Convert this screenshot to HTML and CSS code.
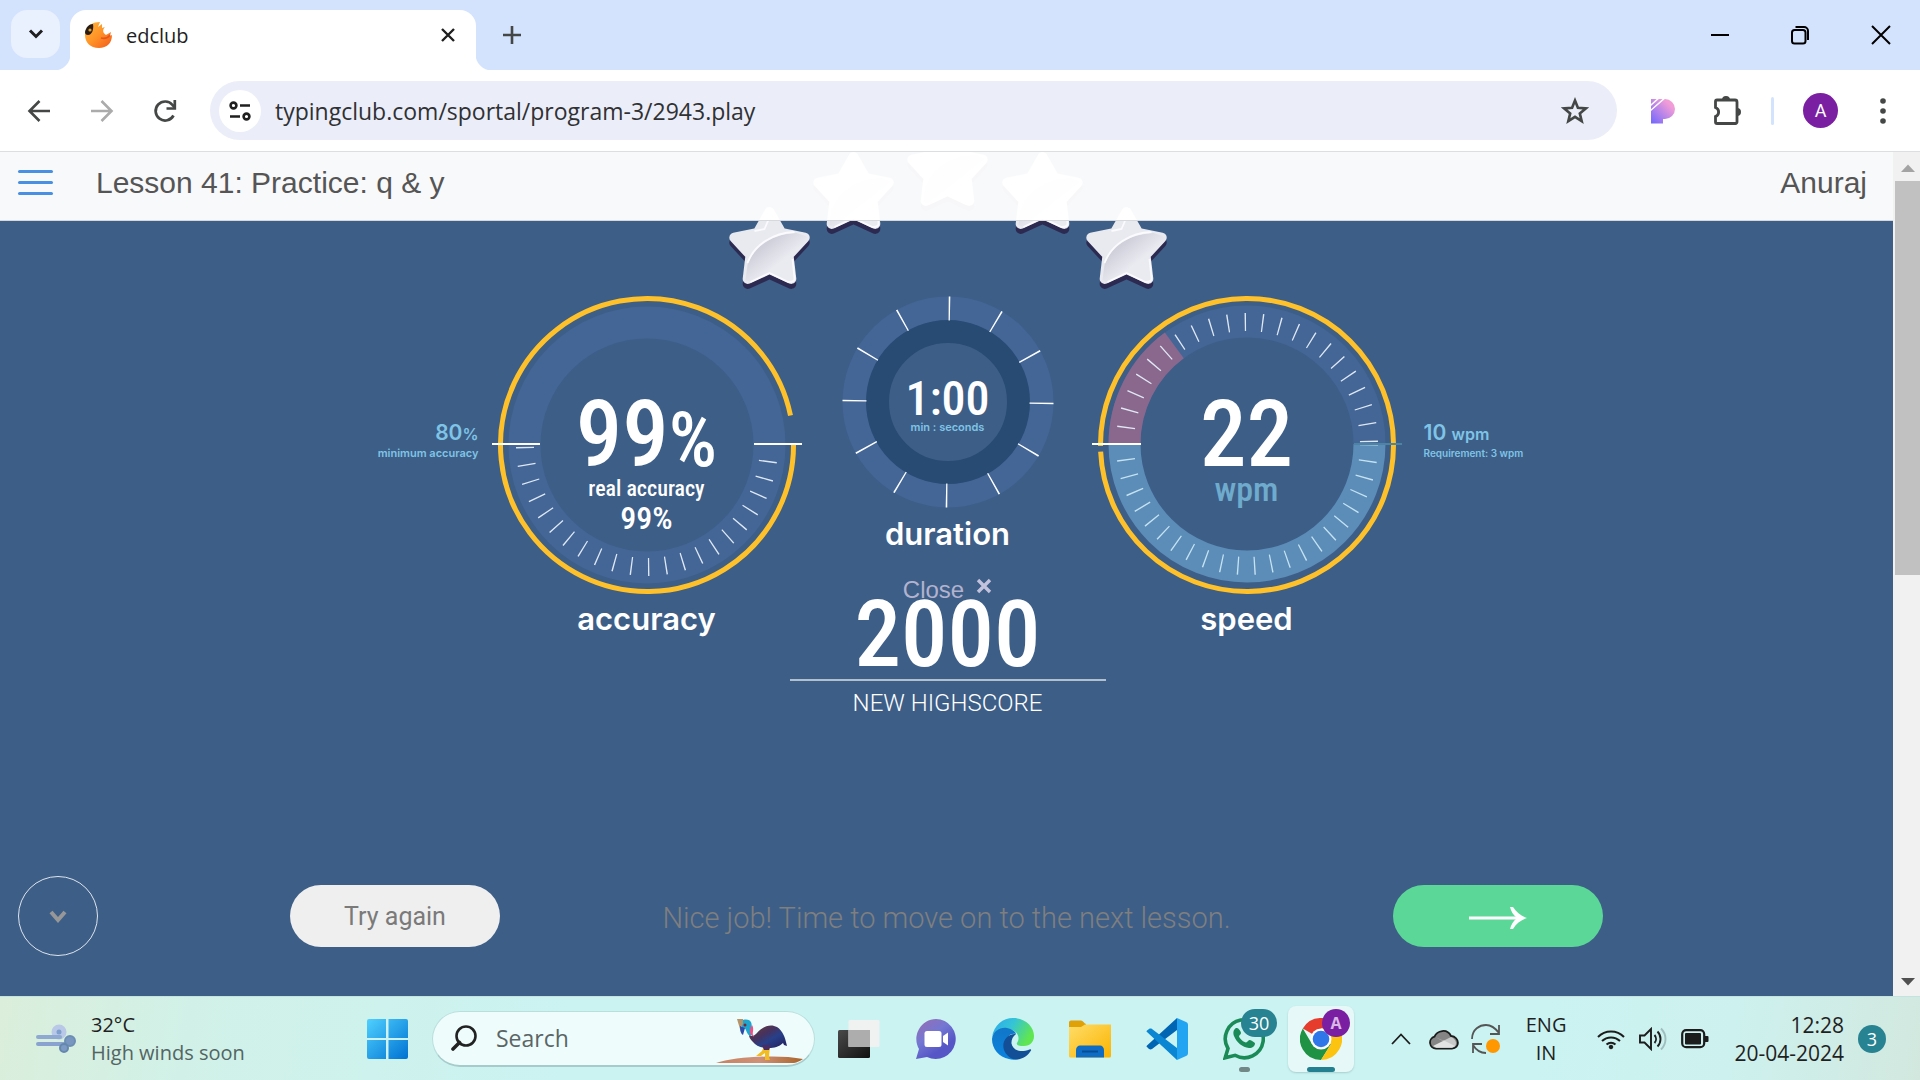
FILE: index.html
```html
<!DOCTYPE html>
<html lang="en">
<head>
<meta charset="utf-8">
<meta name="viewport" content="width=device-width, initial-scale=1">
<title>edclub</title>
<link rel="stylesheet" href="styles.css">
</head>
<body>
<div class="tabstrip">
  <button class="tab-search" aria-label="Search tabs"><svg width="16" height="12" viewBox="0 0 16 12"><path d="M2 2.500l6 6 6-6" fill="none" stroke="#1f1f1f" stroke-width="3"/></svg></button>
  <div class="tab">
    <svg class="favicon" width="28" height="28" viewBox="0 0 28 28"><defs><linearGradient id="bird" x1="0" y1="0" x2="1" y2="1"><stop offset="0" stop-color="#ffb53a"/><stop offset=".5" stop-color="#ff9327"/><stop offset="1" stop-color="#f15a1c"/></linearGradient></defs><path d="M2 10C4 4 9 1 16 1l-2 5 4-3v4l3-1c-3 3-2 6 1 8l5-3-1 4 2-1c0 8-5 13-13 13C6 27 1 21 1 14c0-2 .3-3 1-4z" fill="url(#bird)"/><path d="M1 11C2 6 5 3 9 3c1 5-1 11-5 11-2 0-3-1-3-3z" fill="#2a1c12"/><circle cx="6" cy="9" r="1.600" fill="#d8a13a"/><path d="M17 17c4 1 7 0 9-3" stroke="#e9541b" fill="none" stroke-width="1.500"/></svg>
    <span class="tab-title">edclub</span>
    <button class="plain" aria-label="Close tab"><svg width="16" height="16" viewBox="0 0 16 16"><path d="M2 2l12 12M14 2L2 14" stroke="#1f1f1f" stroke-width="2.400"/></svg></button>
  </div>
  <button class="plain new-tab" aria-label="New tab"><svg width="18" height="18" viewBox="0 0 18 18"><path d="M9 0v18M0 9h18" stroke="#444746" stroke-width="2.600"/></svg></button>
  <div class="window-controls">
    <button class="plain" aria-label="Minimize"><svg width="18" height="20" viewBox="0 0 18 20"><path d="M0 10h18" stroke="#000" stroke-width="2"/></svg></button>
    <button class="plain" aria-label="Restore"><svg width="20" height="20" viewBox="0 0 20 20" fill="none" stroke="#000" stroke-width="2"><rect x="2" y="5" width="13.500" height="13.500" rx="2.500"/><path d="M5.500 2h8.500a4 4 0 0 1 4 4v9"/></svg></button>
    <button class="plain" aria-label="Close"><svg width="20" height="20" viewBox="0 0 20 20"><path d="M1 1l18 18M19 1L1 19" stroke="#000" stroke-width="2"/></svg></button>
  </div>
</div>

<div class="toolbar">
  <div class="nav">
    <button class="plain" aria-label="Back"><svg width="24" height="24" viewBox="0 0 24 24" fill="none" stroke="#444746" stroke-width="2.600"><path d="M23 12H3M12.500 2L2.500 12l10 10"/></svg></button>
    <button class="plain" aria-label="Forward"><svg width="24" height="24" viewBox="0 0 24 24" fill="none" stroke="#ababab" stroke-width="2.600"><path d="M1 12h20M11.500 2l10 10-10 10"/></svg></button>
    <button class="plain" aria-label="Reload"><svg width="24" height="24" viewBox="0 0 24 24" fill="none" stroke="#444746" stroke-width="2.700"><path d="M20.500 16.500A9.500 9.500 0 1 1 19.500 6l2.500 2.500"/><path d="M21.800 1v8.500H13.500"/></svg></button>
  </div>
  <div class="omnibox">
    <button class="site-info" aria-label="View site information"><svg width="22" height="20" viewBox="0 0 22 20" fill="none" stroke="#1f1f1f" stroke-width="2.600"><circle cx="4.500" cy="4.500" r="2.900"/><path d="M11 4.500h10M1 15.500h10"/><circle cx="17.500" cy="15.500" r="2.900"/></svg></button>
    <input class="url" type="text" aria-label="Address" value="typingclub.com/sportal/program-3/2943.play">
    <button class="plain" aria-label="Bookmark this tab"><svg width="28" height="28" viewBox="0 0 28 28"><path d="M14 3.500l2.900 7.300 7.900.6-6 5 1.900 7.700-6.700-4.200-6.700 4.200 1.900-7.700-6-5 7.900-.6z" fill="none" stroke="#444746" stroke-width="2.600"/></svg></button>
  </div>
  <div class="extensions">
    <svg class="ext-p" width="24" height="26" viewBox="0 0 24 26"><defs><linearGradient id="pg" x1="1" y1="0" x2="0" y2="1"><stop offset="0" stop-color="#f9a2d4"/><stop offset=".25" stop-color="#ee9bd8"/><stop offset="1" stop-color="#6f66ff"/></linearGradient></defs><path d="M0 1h14a10 10 0 0 1 0 20h-2v4.500H0z" fill="url(#pg)"/><path d="M-1 8L9-1M-1 13L15-1" stroke="#fff" stroke-width="1.500"/></svg>
    <button class="plain" aria-label="Extensions"><svg width="30" height="30" viewBox="0 0 30 30"><path d="M3.500 5.500a1.500 1.500 0 0 1 1.500-1.500h18a2 2 0 0 1 2 2v20a1.500 1.500 0 0 1-1.500 1.500H5A1.500 1.500 0 0 1 3.500 26v-5.500a4.800 4.800 0 0 0 0-9z" fill="none" stroke="#444746" stroke-width="2.800"/><path d="M10 4a4 4 0 0 1 8 0zM25 12a4 4 0 0 1 0 8z" fill="#444746"/></svg></button>
    <span class="divider"></span>
    <button class="avatar" aria-label="Profile">A</button>
    <button class="plain" aria-label="Menu"><svg width="6" height="26" viewBox="0 0 6 26" fill="#444746"><circle cx="3" cy="3" r="2.800"/><circle cx="3" cy="13" r="2.800"/><circle cx="3" cy="23" r="2.800"/></svg></button>
  </div>
</div>

<div class="viewport">
  <div class="page">
    <header class="lesson-bar">
      <button class="plain burger" aria-label="Open menu"><i></i><i></i><i></i></button>
      <h1>Lesson 41: Practice: q &amp; y</h1>
      <a class="user" href="#">Anuraj</a>
    </header>
    <main class="result">
      <svg class="stars" width="440" height="138" viewBox="-2 0 440 138">
        <defs>
          <linearGradient id="shine" x1=".1" y1=".1" x2=".7" y2=".7"><stop offset=".3" stop-color="#cfd0da"/><stop offset=".8" stop-color="#eaebf1"/></linearGradient>
          <g id="star">
            <polygon points="0,-37 11.800,-16.200 35.200,-11.400 19,6.200 21.800,29.900 0,20 -21.800,29.900 -19,6.200 -35.200,-11.400 -11.800,-16.200" transform="translate(0 5)" fill="#2c2a50" stroke="#2c2a50" stroke-width="10" stroke-linejoin="round"/>
            <polygon points="0,-37 11.800,-16.200 35.200,-11.400 19,6.200 21.800,29.900 0,20 -21.800,29.900 -19,6.200 -35.200,-11.400 -11.800,-16.200" fill="#e9eaf0" stroke="#e9eaf0" stroke-width="10" stroke-linejoin="round"/>
            <path d="M-22 16C-15-4 4-15 27-16l9 3c4 3 2 6-1 8L23 8l2 23-6 2-19-9-19 9-5-2z" fill="url(#shine)"/>
            <path d="M-22 14C-15-5 4-16 25-17M-15-18l10-2 6-14M-19 33l19-9 19 9c6 0 6-2 6-4L23 10" fill="none" stroke="#fbfbfd" stroke-width="1.800"/>
          </g>
        </defs>
        <use href="#star" x="40.500" y="97"/><use href="#star" x="124.500" y="42"/><use href="#star" x="218.500" y="19"/><use href="#star" x="313.500" y="42"/><use href="#star" x="397.500" y="97"/>
      </svg>

      <div class="stage">
        <div class="target target-left">
          <p class="target-value">80<small>%</small></p>
          <p class="target-note">minimum accuracy</p>
        </div>

        <section class="dial">
          <svg class="gauge" width="310" height="300" viewBox="0 0 310 300" fill="none">
            <circle cx="155" cy="150" r="122.500" stroke="#436696" stroke-width="32"/>
            <path d="M277 150A122 122 0 0 1 33 150" pathLength="23" stroke="#dfe8f4" stroke-width="18" stroke-dasharray="0 .96 .08 0" />
            <path d="M301.500 150A146.500 146.500 0 1 1 298.500 120.500" stroke="#ffc12a" stroke-width="5"/>
            <path d="M0 149h48M262 149h48" stroke="#fff" stroke-width="2"/>
          </svg>
          <div class="reading">
            <p class="big">99<small>%</small></p>
            <p class="real">real accuracy</p>
            <p class="real-value">99%</p>
          </div>
          <h2>accuracy</h2>
        </section>

        <div class="middle">
          <section class="timer">
            <svg class="gauge" width="212" height="212" viewBox="0 0 212 212" fill="none">
              <circle cx="106" cy="106" r="93.500" stroke="#436696" stroke-width="24"/>
              <circle cx="106" cy="106" r="70.500" stroke="#284b73" stroke-width="23"/>
              <circle cx="106" cy="106" r="93.500" pathLength="1200" stroke="#fff" stroke-width="24" stroke-dasharray="3 97" transform="rotate(.4 106 106)"/>
            </svg>
            <div class="reading">
              <p class="clock">1:00</p>
              <p class="target-note">min : seconds</p>
            </div>
            <h2>duration</h2>
          </section>
          <button class="plain close-ad">Close <svg width="16" height="16" viewBox="0 0 16 16"><path d="M2 2l12 12M14 2L2 14" stroke="#c3c2dc" stroke-width="3.400"/></svg></button>
          <div class="score">
            <p class="big">2000</p>
            <p class="score-label">NEW HIGHSCORE</p>
          </div>
        </div>

        <section class="dial">
          <svg class="gauge" width="310" height="300" viewBox="0 0 310 300" fill="none">
            <path d="M32.500 149A122.500 122.500 0 0 1 277.500 149" stroke="#436696" stroke-width="32"/>
            <path d="M32.500 149A122.500 122.500 0 0 1 82.300 50.400" stroke="#8a678d" stroke-width="32"/>
            <path d="M277.500 149A122.500 122.500 0 0 1 32.500 149" stroke="#5b8db8" stroke-width="32"/>
            <path d="M33 149A122 122 0 0 1 277 149" pathLength="23" stroke="#dfe8f4" stroke-width="18" stroke-dasharray="0 .96 .08 0"/>
            <path d="M277 149A122 122 0 0 1 33 149" pathLength="23" stroke="#c5e2f0" stroke-width="18" stroke-dasharray=".08 .92"/>
            <circle cx="155" cy="150" r="146.500" pathLength="360" transform="rotate(179.600 155 150)" stroke="#ffc12a" stroke-width="5" stroke-dasharray="357.800 2.200"/>
            <path d="M262 149h48" stroke="#4d83a3" stroke-width="2"/>
            <path d="M0 149h49" stroke="#fff" stroke-width="2"/>
          </svg>
          <div class="reading">
            <p class="big">22</p>
            <p class="unit">wpm</p>
          </div>
          <h2>speed</h2>
        </section>

        <div class="target target-right">
          <p class="target-value">10 <small>wpm</small></p>
          <p class="target-note">Requirement: 3 wpm</p>
        </div>
      </div>

      <div class="actions">
        <button class="round" aria-label="Scroll down"><svg width="18" height="13" viewBox="0 0 18 13"><path d="M2 2l7 8 7-8" fill="none" stroke="#979797" stroke-width="4"/></svg></button>
        <button class="pill again">Try again</button>
        <p class="message">Nice job! Time to move on to the next lesson.</p>
        <button class="pill next" aria-label="Next lesson"><svg width="58" height="22" viewBox="0 0 58 22" fill="#fff"><path d="M0 9.500h50v3H0z"/><path d="M41 0h3c3 5 8 9 14 11-6 2-11 6-14 11h-3c1-4 3-8 7-11-4-3-6-7-7-11z"/></svg></button>
      </div>
    </main>
  </div>
  <div class="scrollbar">
    <svg width="14" height="8" viewBox="0 0 14 8"><path d="M0 8l7-7.500L14 8z" fill="#a3a3a3"/></svg>
    <span class="thumb"></span>
    <svg class="down" width="14" height="8" viewBox="0 0 14 8"><path d="M0 0l7 7.500L14 0z" fill="#505050"/></svg>
  </div>
</div>

<footer class="taskbar">
  <button class="plain weather">
    <svg width="40" height="30" viewBox="0 0 40 30" fill="none" stroke-linecap="round"><circle cx="23" cy="8" r="5" stroke="#b9c8e6" stroke-width="5" fill="#7f9fce"/><path d="M2 13h22" stroke="#8fa9d2" stroke-width="4"/><path d="M2 20h28" stroke="#89a2cf" stroke-width="4"/><circle cx="34" cy="17" r="5" fill="#7896c0" stroke="#6c8eb4" stroke-width="2"/><circle cx="28" cy="24" r="4" fill="#7c9ac4" stroke="#6587ae" stroke-width="2"/></svg>
    <span>32°C<br><em>High winds soon</em></span>
  </button>
  <button class="plain start" aria-label="Start"><svg width="41" height="40" viewBox="0 0 41 40"><defs><linearGradient id="win" x1="0" y1="0" x2="1" y2="1" ><stop offset="0" stop-color="#4fd0ff"/><stop offset="1" stop-color="#0072d2"/></linearGradient></defs><path d="M2 0h17v19H0V2a2 2 0 0 1 2-2zM21.500 0H39a2 2 0 0 1 2 2v17H21.500zM0 21h19v19H2a2 2 0 0 1-2-2zM21.500 21H41v17a2 2 0 0 1-2 2H21.500z" fill="url(#win)"/></svg></button>
  <div class="search">
    <label for="search"><svg role="img" aria-label="Search" width="26" height="26" viewBox="0 0 26 26" fill="none" stroke="#222" stroke-linecap="round"><circle cx="15" cy="11" r="9.500" stroke-width="2.600"/><path d="M8.500 17.500L2 24" stroke-width="3.600"/></svg></label>
    <input id="search" type="text" placeholder="Search">
    <svg class="bird" width="88" height="46" viewBox="0 0 88 46"><defs><linearGradient id="body" x1="0" y1="0" x2="1" y2="1"><stop offset="0" stop-color="#6b3a35"/><stop offset=".4" stop-color="#443260"/><stop offset=".6" stop-color="#27408a"/><stop offset="1" stop-color="#221e58"/></linearGradient><linearGradient id="sand"><stop offset="0" stop-color="#c78261"/><stop offset=".5" stop-color="#cf9077"/><stop offset="1" stop-color="#a9642a"/></linearGradient></defs><path d="M0 45C18 39 62 36 87 41c-3 2-6 3.500-9 4z" fill="url(#sand)"/><path d="M48 28l-2 5-6 5h5l4-3v7h5l-1-3 1-11z" fill="#f2bd24"/><path d="M33 17c3 2 5 1 8-2 5-6 13-10 20-6 6 4 8 10 10 19l-3-1-1-2c-4 4-9 5-14 5-8 0-13-2-16-6-3-3-4-5-4-7z" fill="url(#body)"/><path d="M46 27h9l-2 5h-5z" fill="#4a2c62"/><path d="M27 2c8-2 10 4 8 9-1 3 1 5 0 7-5-1-4-7-7-8-3 0-4-6-1-8z" fill="#1fa6cf"/><path d="M36 7c3 5-1 8 2 12-5-2-5-7-2-12z" fill="#ee4f84"/><path d="M21 1l6 0v5l-3 5z" fill="#b3946b"/><path d="M24 8l5 2-2 7c-3-2-3-6-3-9z" fill="#2a4ba8"/><circle cx="29" cy="7" r="1.500" fill="#7d2430"/></svg>
  </div>
  <nav class="apps" aria-label="Apps">
    <button class="app" aria-label="Task view"><svg width="42" height="40" viewBox="0 0 42 40"><defs><linearGradient id="tv" x1="0" y1="0" x2="1" y2="1"><stop offset="0" stop-color="#4a4a4a"/><stop offset="1" stop-color="#111"/></linearGradient></defs><rect y="11" width="32" height="28" rx="1.500" fill="url(#tv)"/><rect x="10.500" y="1" width="31" height="27" rx="1" fill="#f1f1f1" fill-opacity=".97"/><path d="M10.500 11H32v17H10.500z" fill="#adadad"/></svg></button>
    <button class="app" aria-label="Chat"><svg width="40" height="40" viewBox="0 0 40 40"><defs><linearGradient id="chat" x1="0" y1="0" x2=".7" y2="1"><stop offset="0" stop-color="#9a6db0"/><stop offset=".45" stop-color="#7377d2"/><stop offset=".8" stop-color="#5656c6"/></linearGradient></defs><path d="M20 0a20 20 0 1 1-9 38L0 40l3-10A20 20 0 0 1 20 0z" fill="url(#chat)"/><rect x="8.500" y="12" width="17" height="16" rx="2.500" fill="#fff"/><path d="M27 17l5-3.500v13L27 23z" fill="#fff"/></svg></button>
    <button class="app" aria-label="Edge"><svg width="42" height="42" viewBox="0 0 42 42"><defs><linearGradient id="e1" x1="0" y1="0" x2="1" y2=".4"><stop offset="0" stop-color="#2ba8ee"/><stop offset=".5" stop-color="#35c4d6"/><stop offset="1" stop-color="#60e650"/></linearGradient><linearGradient id="e2" x1="0" y1="0" x2="0" y2="1"><stop offset="0" stop-color="#1176c8"/><stop offset="1" stop-color="#0a84e0"/></linearGradient></defs><path d="M0 19C2 7 11 0 21 0c13 0 21 9 21 18 0 6-4 10-10 10-5 0-8-1-7-3 4-6 0-13-9-14C8 10 2 14 0 19z" fill="url(#e1)"/><path d="M0 21C1 13 8 9 15 10c5 1 9 4 9 6-9-2-12 9-8 16 4 6 9 9 13 8-4 2-9 2-12 1C7 39 0 31 0 21z" fill="url(#e2)"/><path d="M24 16c-8-1-15 7-12 16 2 5 7 10 13 9.500 6-.5 11-4 14-9 .5-1-.5-1.500-1.500-1-10 4-17 0-18-6-.3-3 1-7 4.500-9.500z" fill="#124f96"/></svg></button>
    <button class="app" aria-label="File Explorer"><svg width="42" height="38" viewBox="0 0 42 38"><defs><linearGradient id="fold" x1="0" y1="0" x2="1" y2="1"><stop offset="0" stop-color="#ffdd69"/><stop offset="1" stop-color="#fbb400"/></linearGradient></defs><path d="M0 2A2 2 0 0 1 2 .5h10c2 0 3 3 5 3.500v8H0z" fill="#e0a008"/><path d="M0 7h12l4-2.500h26V36a1.500 1.500 0 0 1-1.500 1.500H1.500A1.500 1.500 0 0 1 0 36z" fill="url(#fold)"/><path d="M7 37.500V30c0-3 2-4.500 4-4.500h20c2 0 4 2 4 4.500v7.500z" fill="#0f6cc4"/><path d="M13 31.500h16" stroke="#084c93" stroke-width="2"/></svg></button>
    <button class="app" aria-label="Visual Studio Code"><svg width="42" height="42" viewBox="0 0 42 42"><path d="M1 27.500L31 0v12L6 31c-1 .7-2 .5-3 0l-2-2c-.6-.5-.6-1 0-1.500z" fill="#0065b3"/><path d="M1 14l30 28V30L6 11c-1-.7-2-.5-3 0l-2 1.500c-.6.500-.6 1 0 1.500z" fill="#0a86d2"/><path d="M31 0l9 4c1.500.7 2 1.500 2 3v28c0 1.500-.5 2.300-2 3l-9 4z" fill="#23a4f2"/></svg></button>
    <button class="app" aria-label="WhatsApp"><svg width="42" height="42" viewBox="0 0 42 42"><path d="M2.200 39.800L5 30.500A19 19 0 1 1 12 37.300z" fill="none" stroke="#1a8a57" stroke-width="3.600"/><path d="M13 10c-3 2-3 5-2 8 3 7 8 11 15 12 3 .3 6-2 6-4.500 0-1-4-3.500-5.500-3.500s-2 2.500-3.500 2.500c-2 0-6.500-4-7-6 0-1.500 2-2 2-3.500S15.500 10 14 10z" fill="#1a8a57"/></svg><span class="count">30</span><i class="dot"></i></button>
    <button class="app active" aria-label="Chrome"><svg width="42" height="42" viewBox="0 0 42 42"><path d="M21 21L2.800 10.500A21 21 0 0 1 39.200 10.500H21z" fill="#e63c2e"/><path d="M21 21l10 5-10 16A21 21 0 0 1 2.800 10.500L12 26z" fill="#1f9243"/><path d="M21 10.500h18.200A21 21 0 0 1 21 42l10-16z" fill="#fcc310"/><circle cx="21" cy="21" r="10.500" fill="#fff"/><circle cx="21" cy="21" r="8.300" fill="#2f76e8"/></svg><span class="who">A</span><i class="dot"></i></button>
  </nav>
  <div class="tray">
    <button class="plain" aria-label="Hidden icons"><svg width="20" height="12" viewBox="0 0 20 12"><path d="M1 11l9-9.500L19 11" fill="none" stroke="#1c1c1c" stroke-width="1.800"/></svg></button>
    <svg class="cloud" width="30" height="22" viewBox="0 0 30 22"><path d="M7 20.500a6 6 0 0 1-1.500-11.800C8 2.500 18 0 22 8c9 1 9 12.500 1 12.500z" fill="#858585" stroke="#1b1b1b" stroke-width="1.800"/><path d="M6 9l8 4 8-4c6 2 7 10 1 10.500H7L15 13z" fill="#c9c9c9"/><path d="M4 18l11-5.500L26 18l-3 1.800H7z" fill="#e3e3e3"/></svg>
    <svg class="sync" width="30" height="30" viewBox="0 0 30 30" fill="none" stroke="#555" stroke-width="1.800"><path d="M1 15C1 5 9 1 15 1c6 0 10 4 13 8M28 1v9h-9M15 29c-6 0-10-3-13-8M2 29v-9h9"/><circle cx="22" cy="22" r="7" fill="#ff9800" stroke="none"/></svg>
    <button class="plain lang">ENG<br>IN</button>
    <button class="plain status" aria-label="Network, volume and battery">
      <svg width="28" height="22" viewBox="0 0 28 22" fill="none" stroke="#1c1c1c" stroke-width="2"><path d="M1 9a18 18 0 0 1 26 0M5 13a13 13 0 0 1 18 0M9.500 16.500a7 7 0 0 1 9 0"/><circle cx="14" cy="19" r="1.800" fill="#1c1c1c" stroke-width="1"/></svg>
      <svg width="28" height="24" viewBox="0 0 28 24" fill="none" stroke="#1c1c1c" stroke-width="1.900"><path d="M1 8.500h4.500L12 2v20l-6.500-6.500H1z"/><path d="M15.500 8a6 6 0 0 1 0 8M18.500 4.500c4 4 4 11 0 15"/><path d="M22 1.500c6 6 6 15 0 21" stroke="#9fbfbf"/></svg>
      <svg width="28" height="20" viewBox="0 0 28 20"><rect x="1.200" y="1.200" width="22" height="17" rx="4" fill="none" stroke="#1c1c1c" stroke-width="2.200"/><rect x="4" y="4" width="16" height="11.500" rx="1" fill="#1c1c1c"/><path d="M24 7h2.500a1 1 0 0 1 1 1v4a1 1 0 0 1-1 1H24z" fill="#1c1c1c"/></svg>
    </button>
    <button class="plain datetime">12:28<br>20-04-2024</button>
    <span class="notices">3</span>
  </div>
</footer>
</body>
</html>
```

FILE: styles.css
```css
* { box-sizing: border-box; }
body {
  margin: 0;
  min-height: 100vh;
  display: flex;
  flex-direction: column;
  font-family: "Open Sans", "Noto Sans", sans-serif;
  color: #1f1f1f;
}
p, h1, h2 { margin: 0; font-weight: inherit; }
svg { display: block; flex: none; }
button, input { font: inherit; color: inherit; }
.plain { border: 0; background: none; padding: 0; }

/* Tab strip */
.tabstrip {
  height: 70px;
  display: flex;
  padding: 10px 29px 0 11px;
  background: #d3e3fd;
}
.tab-search {
  width: 49px;
  height: 48px;
  margin-right: 10px;
  display: grid;
  place-items: center;
  border: 0;
  border-radius: 16px;
  background: #e9f0fe;
}
.tab {
  position: relative;
  width: 406px;
  display: flex;
  align-items: center;
  padding: 0 20px 10px 14px;
  border-radius: 16px 16px 0 0;
  background: #fff;
}
.tab::before, .tab::after {
  content: "";
  position: absolute;
  bottom: 0;
  width: 16px;
  height: 16px;
}
.tab::before { right: 100%; background: radial-gradient(circle at 0 0, transparent 16px, #fff 17px); }
.tab::after { left: 100%; background: radial-gradient(circle at 100% 0, transparent 16px, #fff 17px); }
.tab-title { flex: 1; margin-left: 14px; font-size: 20px; }
.new-tab { margin: 0 0 10px 27px; }
.window-controls { margin-left: auto; display: flex; align-items: center; gap: 61px; padding-bottom: 10px; }

/* Toolbar */
.toolbar {
  height: 82px;
  display: flex;
  align-items: center;
  padding: 0 34px 0 27px;
  background: linear-gradient(#fff, #fff) content-box, #fff;
  border-bottom: 1px solid #dcdfe2;
}
.nav { display: flex; gap: 39px; width: 183px; }
.omnibox {
  flex: 1;
  height: 59px;
  display: flex;
  align-items: center;
  padding: 0 28px 0 9px;
  border-radius: 30px;
  background: #ebeef8;
}
.site-info {
  width: 42px;
  height: 42px;
  display: grid;
  place-items: center;
  border: 0;
  border-radius: 50%;
  background: #fff;
  padding: 0;
}
.url {
  flex: 1;
  margin-left: 14px;
  padding: 0;
  border: 0;
  background: none;
  font-size: 23px;
  color: #303134;
}
.extensions { display: flex; align-items: center; margin-left: 34px; }
.ext-p { margin-right: 37px; }
.divider { width: 3px; height: 28px; margin: 0 29px; border-radius: 2px; background: #d3e3fd; }
.avatar {
  width: 35px;
  height: 35px;
  margin-right: 42px;
  padding: 0;
  border: 0;
  border-radius: 50%;
  background: #7b1fa2;
  color: #fff;
  font: 18px Roboto, sans-serif;
}

/* Page */
.viewport { flex: 1; display: flex; }
.page {
  flex: 1;
  display: flex;
  flex-direction: column;
  background: #3d5e87;
  overflow: hidden;
}
.lesson-bar {
  position: relative;
  z-index: 1;
  height: 69px;
  display: flex;
  align-items: center;
  padding: 0 26px 7px 18px;
  background: rgba(255, 255, 255, .965);
  border-bottom: 1px solid #d5d9de;
  font: 30px "Liberation Sans", Arial, sans-serif;
  color: #555;
}
.burger { width: 35px; display: grid; gap: 8px; margin-right: 43px; }
.burger i { height: 3px; border-radius: 2px; background: #4a90e2; }
.lesson-bar h1 { font-size: 30px; }
.user { margin-left: auto; color: inherit; text-decoration: none; }
.scrollbar {
  width: 27px;
  display: flex;
  flex-direction: column;
  align-items: center;
  padding: 12px 0 10px 2px;
  background: #f1f1f1;
}
.thumb { width: 100%; height: 394px; margin-top: 9px; background: #c1c1c1; }
.down { margin-top: auto; }

.result { flex: 1; display: flex; flex-direction: column; align-items: center; }
.stars { margin-top: -69px; }
.stage {
  width: 100%;
  display: grid;
  grid-template-columns: 1fr 310px 290px 310px 1fr;
  padding-top: 5px;
  color: #fff;
}
.target { padding-top: 126px; font-family: Inter, sans-serif; color: #7fc4e6; }
.target-left { text-align: right; padding-right: 13px; }
.target-right { padding-left: 22px; }
.target-value { font-size: 21px; line-height: 24px; font-weight: 600; }
.target-value small { font-size: 16px; }
.target-note { font: 600 11px/14px Inter, sans-serif; color: #7fc4e6; }
.target-right .target-note { font-size: 10px; }
.dial, .timer { display: grid; justify-items: center; align-content: start; }
.gauge, .reading { grid-area: 1 / 1; }
.reading { text-align: center; font-family: "Roboto Condensed", "Liberation Sans Narrow", sans-serif; font-weight: 500; }
.dial .reading { padding-top: 102px; }
.big { font: 500 93px/76px "Roboto Condensed", "Liberation Sans Narrow", sans-serif; }
.big small { font-size: 76px; }
.real { font-size: 22px; line-height: 22px; }
.real-value { font-size: 32px; line-height: 36px; }
.unit { font-size: 34px; line-height: 32px; color: #6fabcc; }
h2 { font: 600 31px/36px Inter, sans-serif; }
.dial h2 { margin-top: 6px; }
.middle { display: flex; flex-direction: column; align-items: center; margin: 1px -14px 0 -12px; }
.timer .reading { padding-top: 82px; }
.clock { font-size: 48px; line-height: 42px; }
.timer h2 { margin-top: 8px; }
.close-ad {
  display: flex;
  align-items: center;
  gap: 12px;
  margin-top: 26px;
  font: 24px/20px "Liberation Sans", Arial, sans-serif;
  color: #b2b2cf;
}
.close-ad svg { margin-bottom: 8px; }
.score { width: 100%; margin-top: -5px; text-align: center; }
.score .big { padding-bottom: 6px; border-bottom: 2px solid #b1bfcf; }
.score-label { margin-top: 7px; font: 300 24px/30px Roboto, sans-serif; }

.actions {
  width: 100%;
  margin-top: auto;
  display: flex;
  align-items: center;
  padding: 0 290px 40px 18px;
}
.round {
  width: 80px;
  height: 80px;
  display: grid;
  place-items: center;
  border: 1px solid #dfe5ec;
  border-radius: 50%;
  background: none;
}
.pill {
  width: 210px;
  height: 62px;
  display: grid;
  place-items: center;
  border: 0;
  border-radius: 31px;
  background: #efefef;
  font: 25px Roboto, sans-serif;
  color: #7a7a7a;
}
.again { margin-left: 192px; }
.next { background: #5bd897; }
.next svg { margin-top: 4px; }
.message { flex: 1; padding-top: 3px; text-align: center; font: 300 29px/32px Roboto, sans-serif; color: #7f7f80; }

/* Taskbar */
.taskbar {
  height: 84px;
  display: flex;
  align-items: center;
  padding-right: 34px;
  border-top: 1px solid #c3e3df;
  background: linear-gradient(100deg, #dbeedb 0, #d1f1e8 10%, #cbf3f2 30%, #cbf3f2 80%, #cdf1ee 90%, #d2e8df 100%);
  font-size: 20px;
  line-height: 28px;
}
.weather { width: 367px; display: flex; align-items: center; gap: 15px; padding-left: 36px; text-align: left; }
.weather em { font-style: normal; color: #536563; }
.start { margin-right: 24px; }
.search {
  width: 383px;
  height: 56px;
  display: flex;
  align-items: center;
  padding: 0 10px 0 18px;
  border: 1px solid #b9dfdd;
  border-bottom: 2px solid #a5cbca;
  border-radius: 28px;
  background: #effcfc;
}
.search input {
  flex: 1;
  min-width: 0;
  margin-left: 19px;
  padding: 0;
  border: 0;
  background: none;
  font-size: 23px;
}
.search input::placeholder { color: #5a6666; opacity: 1; }
.bird { margin-top: 6px; }
.apps { display: flex; margin-left: 5px; }
.app {
  position: relative;
  width: 66px;
  height: 66px;
  margin: 0 5px 0 6px;
  display: grid;
  place-items: center;
  border: 0;
  border-radius: 8px;
  padding: 0;
  background: none;
}
.app.active { background: #e6f8f8; box-shadow: 0 1px 2px #a9cfcf; }
.count, .who {
  position: absolute;
  top: 3px;
  right: 4px;
  height: 28px;
  min-width: 28px;
  border-radius: 14px;
  background: #278292;
  color: #fff;
  font-size: 18px;
  line-height: 28px;
}
.count { right: 0; width: 36px; }
.who { background: #7a1fa2; font-size: 16px; font-weight: bold; color: #d9b8e6; }
.dot { position: absolute; bottom: 0; width: 11px; height: 5px; border-radius: 3px; background: #718886; }
.active .dot { width: 28px; background: #238090; }
.tray { margin-left: auto; display: flex; align-items: center; text-align: center; }
.cloud { margin-left: 18px; }
.sync { margin: 0 25px 0 12px; }
.status { display: flex; align-items: center; gap: 14px; margin: 0 25px 0 31px; }
.datetime { font-size: 21px; text-align: right; }
.notices {
  width: 28px;
  height: 28px;
  margin-left: 14px;
  border-radius: 50%;
  background: #278292;
  color: #fff;
  font-size: 18px;
}
```
